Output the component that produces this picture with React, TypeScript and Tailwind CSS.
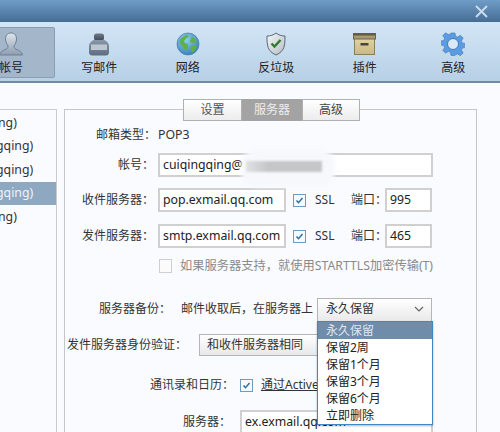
import React from "react";

const C = "\uFF1A";
const K = "\uFF0C";

const Person = () => (
  <svg width="28" height="24" viewBox="0 0 28 24">
    <defs>
      <linearGradient id="p1" x1="0" y1="0" x2="0" y2="1"><stop offset="0" stopColor="#dfe6ee" /><stop offset="1" stopColor="#8d9db0" /></linearGradient>
    </defs>
    <path d="M14 1c-4 0-5.500 3-5.500 6 0 3 1.500 5.500 2.500 7 .3 1.500-.5 2.500-2 3.200C6 18.500 3 19.500 2.500 23h23c-.5-3.500-3.500-4.500-6.500-5.800-1.500-.7-2.300-1.700-2-3.200 1-1.500 2.500-4 2.500-7 0-3-1.500-6-5.500-6z" fill="url(#p1)" stroke="#6f8195" strokeWidth="1" />
  </svg>
);

const Bottle = () => (
  <svg width="22" height="23" viewBox="0 0 22 23">
    <defs>
      <linearGradient id="b1" x1="0" y1="0" x2="0" y2="1"><stop offset="0" stopColor="#8a97a8" /><stop offset="1" stopColor="#5d6d80" /></linearGradient>
      <linearGradient id="b2" x1="0" y1="0" x2="0" y2="1"><stop offset="0" stopColor="#6f7a86" /><stop offset="1" stopColor="#3f4a56" /></linearGradient>
    </defs>
    <rect x="6" y="0.500" width="10" height="7" rx="2.500" fill="url(#b2)" />
    <path d="M5.500 7h11c2 1 4.500 3 4.500 6v6c0 2-1 3.500-3 3.500H4c-2 0-3-1.500-3-3.500v-6c0-3 2.500-5 4.500-6z" fill="url(#b1)" />
    <rect x="3" y="11.500" width="16" height="5.500" fill="#bcc7d2" />
  </svg>
);

const Globe = () => (
  <svg width="24" height="24" viewBox="0 0 24 24">
    <defs>
      <radialGradient id="g1" cx="0.400" cy="0.300" r="0.800"><stop offset="0" stopColor="#8fd0ee" /><stop offset="1" stopColor="#2f78b8" /></radialGradient>
    </defs>
    <circle cx="12" cy="12" r="11" fill="url(#g1)" stroke="#4f83ad" strokeWidth="0.800" />
    <path d="M4 8c2-3 5-5 8-5 1 1 0 3-2 3 0 2-2 2-2 4 1 2 3 1 4 3s-1 5-3 6c-1-2-1-4-3-5-1-2-3-3-2-6z" fill="#5fb04a" />
    <path d="M15 5c3 0 5 2 6 5-1 1-3 0-4 1-2 0-3-1-3-3 1 0 2-1 1-3zM15 14c2-1 4-1 6 0-1 3-3 6-5 7-1-2-2-5-1-7z" fill="#5fb04a" />
  </svg>
);

const Shield = () => (
  <svg width="20" height="24" viewBox="0 0 20 24">
    <defs>
      <linearGradient id="s1" x1="0" y1="0" x2="1" y2="1"><stop offset="0" stopColor="#f5f7f8" /><stop offset="1" stopColor="#b4bcc4" /></linearGradient>
    </defs>
    <path d="M10 1c2.500 2 5.500 3 9 3 0 9 0 15-9 19C1 19 1 13 1 4c3.500 0 6.500-1 9-3z" fill="url(#s1)" stroke="#5c6873" strokeWidth="1" />
    <path d="M5.500 11.500l3 3 6-6.500" fill="none" stroke="#2f7a2c" strokeWidth="2.400" />
  </svg>
);

const BoxIcon = () => (
  <svg width="23" height="22" viewBox="0 0 23 22">
    <defs>
      <linearGradient id="bx" x1="0" y1="0" x2="0" y2="1"><stop offset="0" stopColor="#e2d5a4" /><stop offset="1" stopColor="#c8b884" /></linearGradient>
    </defs>
    <rect x="1.500" y="5" width="20" height="16.500" fill="url(#bx)" stroke="#8a7f5c" strokeWidth="1" />
    <rect x="0.500" y="0.500" width="22" height="5.500" fill="#a89a70" stroke="#6b6448" strokeWidth="1" />
    <rect x="0.500" y="0.500" width="22" height="2" fill="#5f5a45" />
    <rect x="7.500" y="10" width="8" height="2.500" fill="#4a4636" />
  </svg>
);

const Gear = () => (
  <svg width="24" height="24" viewBox="0 0 24 24">
    <path d="M10 1h4l.6 3.200 2 .9L19.400 3.300l2.800 2.800-1.800 2.800.9 2 3.200.6v4l-3.200.6-.9 2 1.800 2.800-2.800 2.800-2.800-1.800-2 .9L14 23.500h-4l-.6-3.200-2-.9-2.800 1.800-2.800-2.800 1.800-2.800-.9-2L-.5 13v-4l3.200-.6.900-2-1.800-2.800 2.800-2.800 2.800 1.800 2-.9z" fill="#5b9be0" stroke="#3f78bd" strokeWidth="0.600" />
    <circle cx="12" cy="12" r="5.500" fill="#dbe9f7" stroke="#3f78bd" strokeWidth="1" />
  </svg>
);

const tools: [React.ReactNode, string][] = [
  [<Bottle />, "写邮件"],
  [<Globe />, "网络"],
  [<Shield />, "反垃圾"],
  [<BoxIcon />, "插件"],
  [<Gear />, "高级"],
];

const Check = ({ on = true }: { on?: boolean }) => (
  <span className={on ? "flex h-[13px] w-[13px] shrink-0 items-center justify-center border border-[#6b9cc4] bg-[#f4f9fe]" : "flex h-[14px] w-[13px] shrink-0 border border-[#cfcfcf] bg-[#fbfbfb]"}>
    {on && (
      <svg width="11" height="11" viewBox="0 0 11 11"><path d="M2.500 5.500l2 2.200 4-4.700" fill="none" stroke="#2f6f9f" strokeWidth="1.500" /></svg>
    )}
  </span>
);

const Chevron = () => (
  <svg width="10" height="6" viewBox="0 0 10 6" className="shrink-0"><path d="M1 1l4 4 4-4" fill="none" stroke="#666" strokeWidth="1.200" /></svg>
);

const inputCls = "flex h-[24px] items-center border-2 border-[#d0d0d0] bg-white px-[3px] text-[12.300px] text-[#222] whitespace-nowrap overflow-hidden";

const Label = ({ w, children }: { w: string; children: React.ReactNode }) => (
  <span className={`${w} shrink-0 text-right whitespace-nowrap`}>{children}</span>
);

const ServerRow = ({ name, host, port, mt, ck }: { name: string; host: string; port: string; mt: string; ck: string }) => (
  <div className={`flex items-center ${mt}`}>
    <Label w="w-[89px]">{name + C}</Label>
    <div className={`${inputCls} ml-[4px] w-[128px]`}>{host}</div>
    <span className={ck}><Check /></span>
    <span className="ml-[9px] w-[36px] text-[12px]">SSL</span>
    <span className="whitespace-nowrap">{"端口" + C}</span>
    <div className={`${inputCls} ml-[-2px] w-[47px]`}>{port}</div>
  </div>
);

export default function App() {
  return (
    <div className="flex h-[432px] w-[500px] flex-col overflow-hidden bg-[#f9fbff] text-[12px] text-[#333] [font-family:'Noto_Sans','Noto_Sans_CJK_SC',sans-serif]">
      <div className="flex h-[22px] shrink-0 items-center justify-end bg-gradient-to-b from-[#6f9dc8] to-[#466d94] pr-[12px]">
        <svg width="13" height="13" viewBox="0 0 13 13"><path d="M1 1l11 11M12 1L1 12" stroke="#c8dbec" strokeWidth="2" /></svg>
      </div>
      <div className="flex h-[61px] shrink-0 items-stretch border-b-2 border-[#6f8aa5] bg-gradient-to-b from-[#d3e6f6] to-[#b7d0e6] pb-[3px] pt-[5px]">
        <div className="flex w-[55px] shrink-0 flex-col items-center overflow-hidden rounded-r-[2px] border border-l-0 border-[#8c9db0] bg-[#a4b6c9] pr-[32px]">
          <div className="mt-[2px] flex h-[28px] w-[28px] shrink-0 items-center justify-center"><Person /></div>
          <span className="mt-[1px] whitespace-nowrap text-[#222]">帐号</span>
        </div>
        <div className="flex">
          {tools.map(([icon, label], i) => (
            <div key={i} className="flex w-[88.500px] flex-col items-center">
              <div className="mt-[3px] flex h-[28px] shrink-0 items-center justify-center">{icon}</div>
              <span className="mt-[1px] whitespace-nowrap text-[#222]">{label}</span>
            </div>
          ))}
        </div>
      </div>
      <div className="flex min-h-0 flex-1 pt-[26px]">
        <div className="h-[400px] w-[57px] shrink-0 border-r border-t border-[#c9cdd2] pt-[1px] text-[12.300px]">
          {[
            ["ng)", false],
            ["gqing)", false],
            ["gqing)", false],
            ["gqing)", true],
            ["ng)", false],
          ].map(([t, sel], i) => (
            <div key={i} className={sel ? "flex h-[23.500px] items-center overflow-hidden bg-[#8fa8c1] text-[#eef3f8]" : "flex h-[23.500px] items-center overflow-hidden text-[#333]"}>
              <span className={t === "ng)" ? "ml-[-2px] whitespace-nowrap" : "ml-[-4px] whitespace-nowrap"}>{t}</span>
            </div>
          ))}
        </div>
        <div className="ml-[7px] h-[400px] w-[413px] shrink-0 border-x border-t border-[#c3c7cc]">
          <div className="mt-[-11px] flex h-[22px] pl-[118px]">
            <div className="flex w-[59px] items-center justify-center border border-[#b0b0b0] bg-gradient-to-b from-white to-[#ececec] text-[#555]">设置</div>
            <div className="flex w-[60px] items-center justify-center bg-[#a3a3a3] text-[#eeeeee]">服务器</div>
            <div className="flex w-[58px] items-center justify-center border border-[#b0b0b0] bg-gradient-to-b from-white to-[#ececec] text-[#444]">高级</div>
          </div>
          <div className="mt-[5px] flex h-[18px] items-center">
            <Label w="w-[91px]">{"邮箱类型" + C}</Label>
            <span className="ml-[2px] text-[12.300px]">POP3</span>
          </div>
          <div className="relative mt-[9px] flex items-center">
            <Label w="w-[89px]">{"帐号" + C}</Label>
            <div className={`${inputCls} ml-[4px] w-[275px]`}>cuiqingqing@</div>
            <div className="absolute left-[176px] top-[-4px] h-[38px] w-[94px] rounded-[16px] bg-[#f6f8fc] blur-[2px]" />
            <div className="absolute left-[181px] top-[8px] h-[11px] w-[76px] bg-gradient-to-r from-[#e0e1e3] to-[#c4c6c8] to-30% blur-[1px]" />
          </div>
          <ServerRow name="收件服务器" host="pop.exmail.qq.com" port="995" mt="mt-[11px]" ck="ml-[7px]" />
          <ServerRow name="发件服务器" host="smtp.exmail.qq.com" port="465" mt="mt-[12px]" ck="ml-[7px]" />
          <div className="mt-[11px] ml-[94px] flex h-[14px] items-center text-[12.250px] text-[#8a8a8a]">
            <Check on={false} />
            <span className="ml-[8px] whitespace-nowrap">{"如果服务器支持" + K + "就使用STARTTLS加密传输(T)"}</span>
          </div>
          <div className="mt-[25px] flex h-[25px] items-center">
            <span className="mb-[3px] flex items-center">
              <Label w="w-[106px]">{"服务器备份" + C}</Label>
              <span className="ml-[10px] w-[136px] whitespace-nowrap">{"邮件收取后" + K + "在服务器上"}</span>
            </span>
            <div className="relative">
              <div className="flex h-[25px] w-[115px] items-center justify-between border border-[#b5b5b5] bg-gradient-to-b from-white to-[#e8e8e8] pb-[3px] pl-[8px] pr-[7px]">
                <span>永久保留</span>
                <Chevron />
              </div>
              <div className="absolute left-0 top-[23px] z-10 w-[116px] border border-[#3f88c5] bg-white shadow-[0_1px_2px_rgba(0,0,0,0.3)]">
                {["永久保留", "保留2周", "保留1个月", "保留3个月", "保留6个月", "立即删除"].map((t, i) => (
                  <div key={t} className={i === 0 ? "flex h-[17px] items-center bg-[#6f8cab] pl-[8px] text-[#dfe7ef]" : "flex h-[17px] items-center pl-[8px] text-[#222]"}>{t}</div>
                ))}
              </div>
            </div>
          </div>
          <div className="mt-[11px] flex h-[21px] items-center">
            <span className="ml-[2px] whitespace-nowrap">{"发件服务器身份验证" + C}</span>
            <div className="ml-[12px] flex h-[22px] w-[234px] items-center border border-[#b5b5b5] bg-gradient-to-b from-white to-[#e8e8e8] pl-[7px]">和收件服务器相同</div>
          </div>
          <div className="mt-[21px] flex h-[18px] items-center">
            <Label w="w-[169px]">{"通讯录和日历" + C}</Label>
            <span className="ml-[6px]"><Check /></span>
            <span className="ml-[8px] whitespace-nowrap underline">通过ActiveSync同步</span>
          </div>
          <div className="mt-[16px] flex items-center">
            <Label w="w-[166px]">{"服务器" + C}</Label>
            <div className={`${inputCls} ml-[9px] w-[193px]`}>ex.exmail.qq.com</div>
          </div>
        </div>
      </div>
    </div>
  );
}
